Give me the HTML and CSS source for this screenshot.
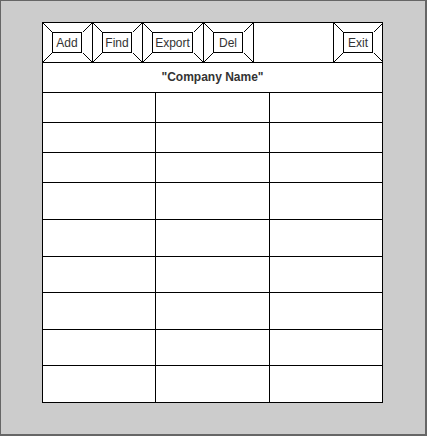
FILE: index.html
```html
<!DOCTYPE html>
<html lang="en">
<head>
  <meta charset="UTF-8">
  <meta name="viewport" content="width=device-width, initial-scale=1.0">
  <title>Company Records</title>
  <link rel="stylesheet" href="styles.css">
</head>
<body>
  <div class="frame">
    <div class="panel">
      <!-- Toolbar -->
      <div class="toolbar">
        <div class="tool-btn">
          <svg class="bevel" viewBox="0 0 49 39" preserveAspectRatio="none"><path d="M0 0L9 9M49 0L40 9M0 39L9 30M49 39L40 30"/></svg>
          <span class="tool-label">Add</span>
        </div>
        <div class="tool-btn">
          <svg class="bevel" viewBox="0 0 49 39" preserveAspectRatio="none"><path d="M0 0L9 9M49 0L40 9M0 39L9 30M49 39L40 30"/></svg>
          <span class="tool-label">Find</span>
        </div>
        <div class="tool-btn tool-wide">
          <svg class="bevel" viewBox="0 0 60 39" preserveAspectRatio="none"><path d="M0 0L9 9M60 0L51 9M0 39L9 30M60 39L51 30"/></svg>
          <span class="tool-label">Export</span>
        </div>
        <div class="tool-btn">
          <svg class="bevel" viewBox="0 0 49 39" preserveAspectRatio="none"><path d="M0 0L9 9M49 0L40 9M0 39L9 30M49 39L40 30"/></svg>
          <span class="tool-label">Del</span>
        </div>
        <div class="toolbar-space"></div>
        <div class="tool-btn tool-exit">
          <svg class="bevel" viewBox="0 0 49 39" preserveAspectRatio="none"><path d="M0 0L9 9M49 0L40 9M0 39L9 30M49 39L40 30"/></svg>
          <span class="tool-label">Exit</span>
        </div>
      </div>

      <div class="title">"Company Name"</div>

      <!-- Records grid -->
      <div class="records">
        <div class="cell"></div><div class="cell"></div><div class="cell"></div>
        <div class="cell"></div><div class="cell"></div><div class="cell"></div>
        <div class="cell"></div><div class="cell"></div><div class="cell"></div>
        <div class="cell"></div><div class="cell"></div><div class="cell"></div>
        <div class="cell"></div><div class="cell"></div><div class="cell"></div>
        <div class="cell"></div><div class="cell"></div><div class="cell"></div>
        <div class="cell"></div><div class="cell"></div><div class="cell"></div>
        <div class="cell"></div><div class="cell"></div><div class="cell"></div>
        <div class="cell"></div><div class="cell"></div><div class="cell"></div>
      </div>
    </div>
  </div>
</body>
</html>
```
FILE: styles.css
```css
/* Page frame */
html, body {
  margin: 0;
  padding: 0;
}

body {
  font-family: "Liberation Sans", Arial, sans-serif;
  font-size: 12px;
  color: #333;
}

.frame {
  box-sizing: border-box;
  width: 427px;
  height: 436px;
  background-color: #cccccc;
  border: 1px solid #666;
  border-right-width: 2px;
  border-bottom-width: 2px;
  padding: 21px 0 0 41px;
}

.panel {
  width: 339px;
  border: 1px solid #000;
  background-color: #fff;
}

/* Toolbar */
.toolbar {
  display: flex;
  height: 39px;
  border-bottom: 1px solid #000;
}

.tool-btn {
  position: relative;
  box-sizing: border-box;
  width: 50px;
  padding: 9px 10px 9px 9px;
  border-right: 1px solid #000;
}

.tool-wide {
  width: 61px;
}

.tool-exit {
  width: 49px;
  padding-right: 9px;
  border-right: none;
  border-left: 1px solid #000;
}

.toolbar-space {
  flex: 1;
}

.bevel {
  position: absolute;
  left: 0;
  top: 0;
  width: 49px;
  height: 39px;
  stroke: #000;
  stroke-width: 1;
  fill: none;
}

.tool-wide .bevel {
  width: 60px;
}

.tool-label {
  position: relative;
  box-sizing: border-box;
  display: flex;
  align-items: center;
  justify-content: center;
  height: 21px;
  border: 1px solid #000;
  background-color: #fff;
}

/* Title row */
.title {
  height: 29px;
  line-height: 29px;
  text-align: center;
  font-weight: bold;
  border-bottom: 1px solid #000;
}

/* Records grid */
.records {
  display: grid;
  grid-template-columns: 112px 113px 112px;
  grid-template-rows: 29px 29px 29px 36px 36px 35px 36px 35px 36px;
  gap: 1px;
  background-color: #000;
}

.cell {
  background-color: #fff;
}
```
